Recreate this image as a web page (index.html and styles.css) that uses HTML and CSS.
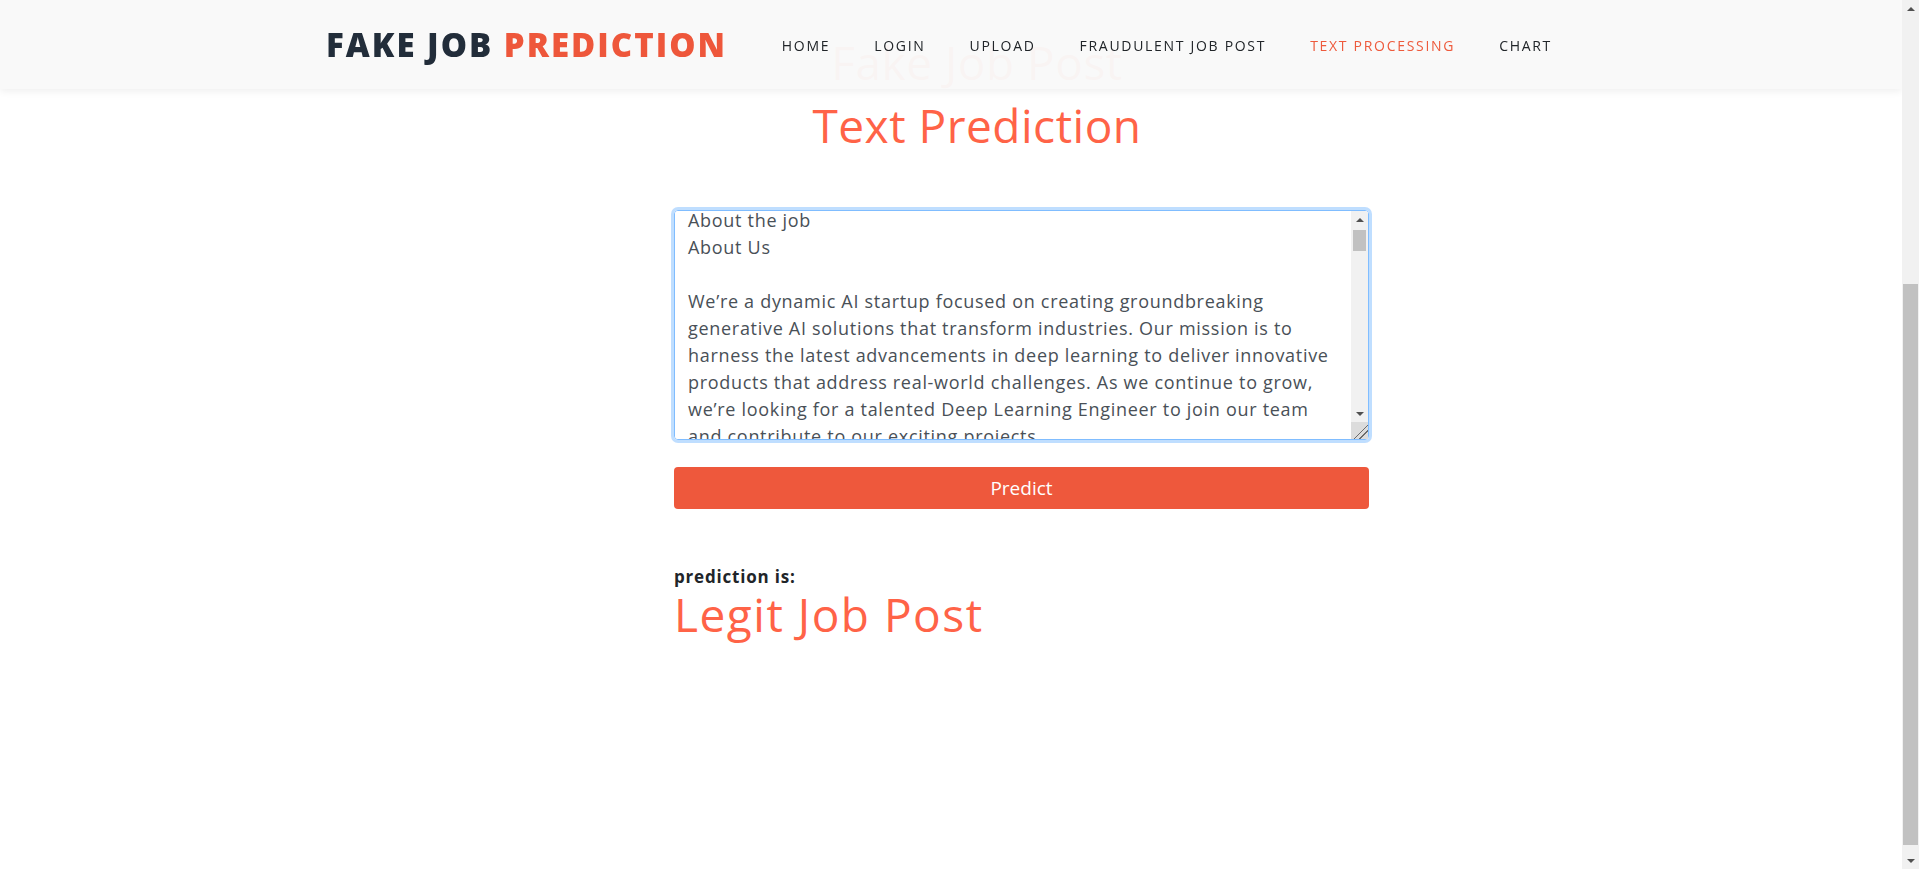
FILE: index.html
```html
<!DOCTYPE html>
<html lang="en">
<head>
<meta charset="utf-8">
<title>Fake Job Prediction - Text Processing</title>
<link rel="stylesheet" href="styles.css">
</head>
<body>
<header class="site-header">
  <div class="header-inner">
    <a class="logo" href="#">FAKE JOB <span>PREDICTION</span></a>
    <ul class="nav">
      <li><a href="#">Home</a></li>
      <li><a href="#">Login</a></li>
      <li><a href="#">Upload</a></li>
      <li><a href="#">Fraudulent Job Post</a></li>
      <li><a class="active" href="#">Text Processing</a></li>
      <li><a href="#">Chart</a></li>
    </ul>
  </div>
</header>

<div class="page-scrollbar" aria-hidden="true">
  <span class="sb-btn sb-up"></span>
  <span class="sb-track"><span class="sb-thumb page-thumb"></span></span>
  <span class="sb-btn sb-down"></span>
</div>

<div class="intro"></div>

<main class="content">
  <h1 class="page-title page-title-top">Fake Job Post</h1>
  <h2 class="page-title">Text Prediction</h2>

  <form class="predict-form">
    <div class="editor">
      <textarea class="job-text" name="text">
About the job
About Us

We’re a dynamic AI startup focused on creating groundbreaking
generative AI solutions that transform industries. Our mission is to
harness the latest advancements in deep learning to deliver innovative
products that address real-world challenges. As we continue to grow,
we’re looking for a talented Deep Learning Engineer to join our team
and contribute to our exciting projects.

Job Description

As a Deep Learning Engineer, you will design, build and deploy state-of-the-art models that power our generative AI platform. You will work closely with researchers, product managers and software engineers to turn cutting-edge ideas into reliable production systems.

Key Responsibilities

- Design, train and fine-tune deep learning models for text, image and multimodal generation.
- Build scalable data pipelines for collecting, cleaning and augmenting large datasets.
- Optimize model performance, latency and memory footprint for production deployment.
- Research and prototype new architectures, including transformers and diffusion models.
- Collaborate with the engineering team to integrate models into our products and APIs.
- Monitor model quality in production and continuously improve accuracy and robustness.
- Document experiments, results and best practices for the wider team.

Requirements

- Bachelor’s or Master’s degree in Computer Science, Machine Learning or a related field.
- 3+ years of hands-on experience building deep learning systems.
- Strong proficiency in Python and frameworks such as PyTorch or TensorFlow.
- Solid understanding of neural network architectures, optimization and regularization.
- Experience with distributed training on GPUs and cloud platforms (AWS, GCP or Azure).
- Familiarity with MLOps tools for experiment tracking, versioning and deployment.
- Excellent problem-solving skills and the ability to work independently.

Nice to Have

- Publications in top-tier machine learning conferences.
- Experience with large language models, retrieval-augmented generation or reinforcement learning from human feedback.
- Contributions to open-source machine learning projects.

What We Offer

- Competitive salary and equity package.
- Flexible working hours and a remote-friendly culture.
- Access to state-of-the-art compute resources.
- Learning and development budget for courses and conferences.
- A collaborative, fast-paced environment where your work has real impact.

If you are passionate about deep learning and want to shape the future of generative AI, we would love to hear from you. Apply now and join us on our mission!</textarea>
      <div class="editor-scrollbar" aria-hidden="true">
        <span class="sb-btn sb-up"></span>
        <span class="sb-track"><span class="sb-thumb editor-thumb"></span></span>
        <span class="sb-btn sb-down"></span>
        <span class="sb-corner"></span>
      </div>
    </div>
    <button class="predict-btn" type="button">Predict</button>
  </form>

  <section class="result">
    <p class="result-label">prediction is:</p>
    <h2 class="result-value">Legit Job Post</h2>
  </section>
</main>

<script src="script.js"></script>
</body>
</html>
```

FILE: styles.css
```css
* {
  box-sizing: border-box;
}

body {
  margin: 0 17px 0 0;
  background: #ffffff;
  color: #212529;
  font-family: "Open Sans", "Noto Sans", sans-serif;
}

/* Drawn scrollbars (page and textarea) */
.page-scrollbar {
  position: fixed;
  top: 0;
  right: 0;
  bottom: 0;
  width: 17px;
  display: flex;
  flex-direction: column;
  background: #f1f1f1;
  z-index: 20;
}

.sb-btn {
  flex: 0 0 17px;
  height: 17px;
  display: flex;
  align-items: center;
  justify-content: center;
  background: #f1f1f1;
}

.sb-btn::before {
  content: "";
  width: 0;
  height: 0;
  border-left: 4px solid transparent;
  border-right: 4px solid transparent;
}

.sb-up::before {
  border-bottom: 4px solid #505050;
}

.sb-down::before {
  border-top: 4px solid #505050;
}

.sb-track {
  flex: 1 1 auto;
  display: flex;
  flex-direction: column;
  padding: 0 2px;
  background: #f1f1f1;
  min-height: 0;
}

.sb-thumb {
  display: block;
  background: #c1c1c1;
}

.page-thumb {
  margin-top: 267px;
  height: 561px;
  margin-left: -1px;
  margin-right: -1px;
}

.editor-thumb {
  margin-top: 2px;
  height: 21px;
}

.sb-corner {
  flex: 0 0 17px;
  height: 17px;
  background:
    linear-gradient(135deg, transparent 0 56%, #6b6b6b 56% 61%, transparent 61% 73%, #6b6b6b 73% 78%, transparent 78%),
    #dcdcdc;
}

/* Header */
.site-header {
  position: fixed;
  top: 0;
  left: 0;
  right: 17px;
  height: 89px;
  background: rgba(249, 249, 249, 0.97);
  box-shadow: 0 2px 8px rgba(0, 0, 0, 0.07);
  z-index: 10;
}

.header-inner {
  width: 1250px;
  height: 100%;
  margin: 0 auto;
  display: flex;
  align-items: center;
  justify-content: space-between;
}

.logo {
  font-size: 33px;
  font-weight: 800;
  letter-spacing: 2px;
  line-height: 1;
  color: #222d3a;
  text-decoration: none;
}

.logo span {
  color: #ee573b;
}

.nav {
  display: flex;
  list-style: none;
  margin: 0;
  padding: 1px 2px 0 0;
}

.nav a {
  display: block;
  padding: 0 22px;
  font-size: 14px;
  font-weight: 500;
  letter-spacing: 1.7px;
  text-transform: uppercase;
  color: #212529;
  text-decoration: none;
}

.nav a.active {
  color: #ee5a3c;
}

/* Content */
.intro {
  height: 456px;
}

.content {
  width: 1250px;
  margin: 0 auto;
  padding-bottom: 236px;
}

.page-title {
  margin: 0;
  padding-left: 52px;
  text-align: center;
  font-size: 46px;
  font-weight: 400;
  line-height: 55px;
  letter-spacing: 0.5px;
  color: #ff6347;
}

.page-title-top {
  line-height: 38px;
  margin-bottom: 17px;
}

.predict-form {
  width: 695px;
  margin: 57px 0 0 348px;
  display: flex;
  flex-direction: column;
  gap: 27px;
}

.editor {
  position: relative;
  height: 230px;
}

.editor-scrollbar {
  position: absolute;
  top: 1px;
  right: 1px;
  bottom: 1px;
  width: 17px;
  display: flex;
  flex-direction: column;
  border-top-right-radius: 3px;
  overflow: hidden;
}

.job-text {
  display: block;
  width: 100%;
  height: 100%;
  padding: 6px 27px 6px 13px;
  border: 1px solid #80bdff;
  border-radius: 4px;
  box-shadow: 0 0 0 3px rgba(0, 123, 255, 0.25);
  outline: none;
  resize: none;
  font-family: "Open Sans", "Noto Sans", sans-serif;
  font-size: 18px;
  line-height: 27px;
  letter-spacing: 0.7px;
  color: #495057;
  background: #ffffff;
}

.predict-btn {
  height: 42px;
  border: 0;
  border-radius: 4px;
  background: #ee583c;
  color: #ffffff;
  font-family: "Open Sans", "Noto Sans", sans-serif;
  font-size: 19px;
  cursor: pointer;
}

.result {
  margin: 58px 0 0 348px;
}

.result-label {
  margin: 0;
  font-size: 17px;
  font-weight: 700;
  line-height: 20px;
  letter-spacing: 0.8px;
  color: #212529;
}

.result-value {
  margin: 0;
  font-size: 46px;
  font-weight: 400;
  line-height: 55px;
  letter-spacing: 1.5px;
  color: #ff6347;
}
```

FILE: script.js
```js
var jobText = document.querySelector('.job-text');
if (jobText) {
  jobText.scrollTop = 10;
}
window.scrollTo(0, 413);
window.addEventListener('load', function () {
  if (jobText) {
    jobText.scrollTop = 10;
  }
  window.scrollTo(0, 413);
});
```
